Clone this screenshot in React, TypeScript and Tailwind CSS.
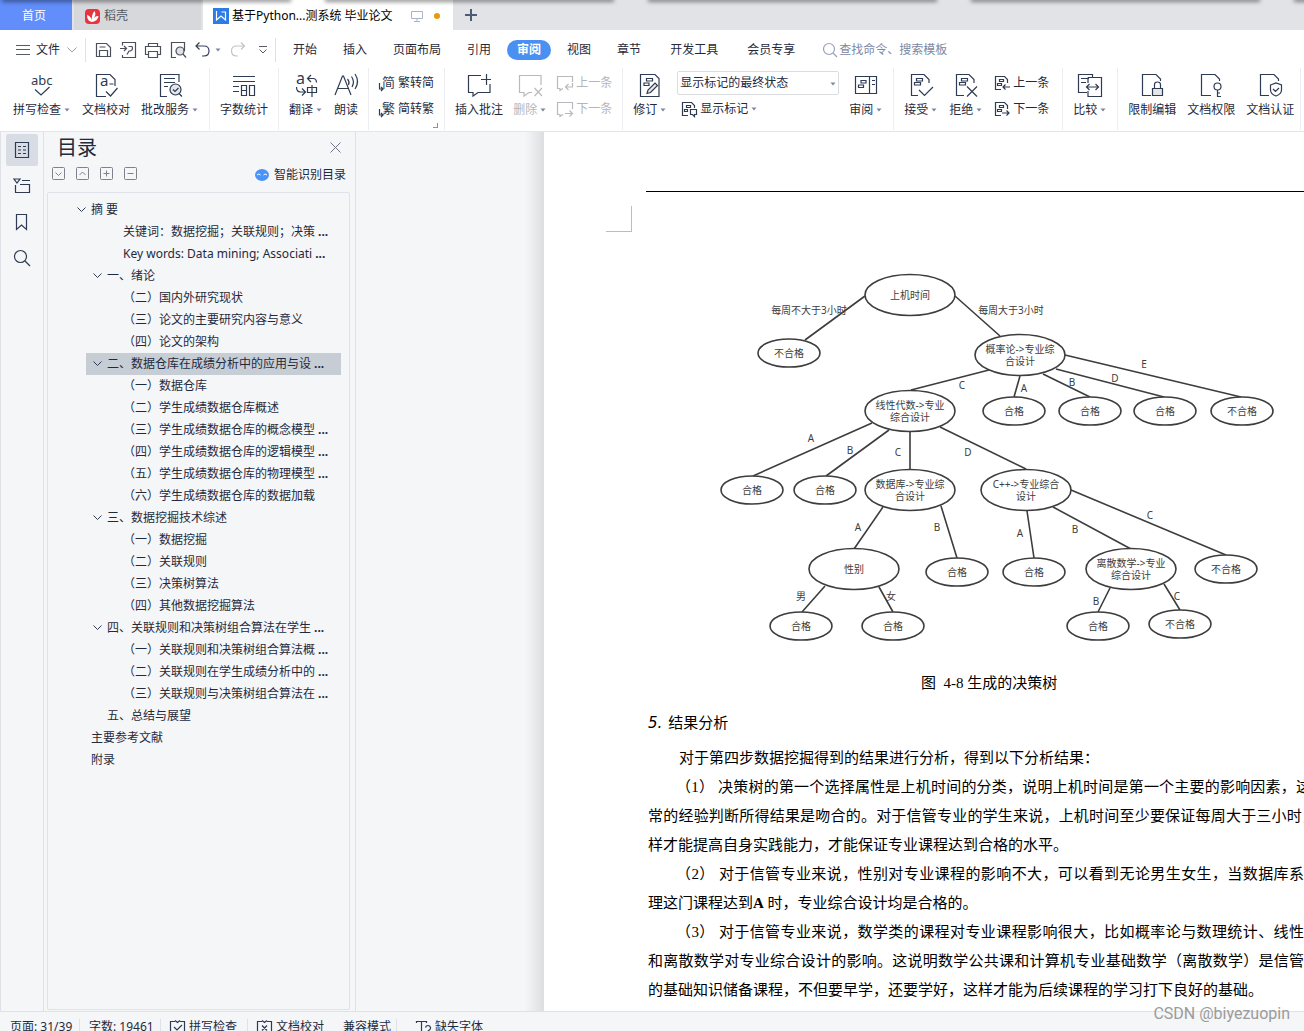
import type { ReactNode } from 'react';

const ink = '#2f3b52';

/* ---------- Icons ---------- */

function Icon({ size = 24, color = ink, children }: { size?: number; color?: string; children: ReactNode }) {
  return (
    <svg
      width={size}
      height={size}
      viewBox={`0 0 ${size} ${size}`}
      fill="none"
      stroke={color}
      strokeWidth={1.2}
      className="shrink-0 overflow-visible"
      aria-hidden="true"
    >
      {children}
    </svg>
  );
}

function Glyph({ x, y, size, children }: { x: number; y: number; size: number; children: string }) {
  return (
    <text x={x} y={y} fontSize={size} fill={ink} stroke="none">
      {children}
    </text>
  );
}

const docLines = <path d="M7.5 5.5h6V8h-6zM5.5 9.5h6V12h-6z" />;
const smallDoc = 'M7 14.5H1.5v-13h9l3 3V8M5.5 4.5h4v2h-4zM3.5 8.5h4v2h-4z';

const icons = {
  spell: (
    <Icon>
      <Glyph x={1} y={12} size={13}>abc</Glyph>
      <path d="M5 16.5l6 5.5 8.5-8" />
    </Icon>
  ),
  proof: (
    <Icon>
      <path d="M12 23.5H2.5v-22H16l5 5V13M15.5 11h4M12 18.5l4.5 4.5 7-8" />
      <Glyph x={6} y={13} size={15}>a</Glyph>
    </Icon>
  ),
  correct: (
    <Icon>
      <path d="M9 23.5H2.5v-22H21V9M6 5.5h11M6 9.5h11M6 13.5h4M21 20.5l3 3" />
      <circle cx="17.5" cy="16.5" r="5.5" fill="#e4e6ea" />
      <path d="M15 16.5l2 2 3.5-3.5" />
    </Icon>
  ),
  count: (
    <Icon>
      <path d="M1 3.5h22M1 8.5h22M1 13.5h6M1 18.5h6M9.5 12.5h5v10h-5zM9.5 17.5h5M17.5 12.5h5v10h-5z" />
    </Icon>
  ),
  translate: (
    <Icon>
      <Glyph x={2} y={11} size={16}>a</Glyph>
      <path d="M17 2l-3.5 3.5L17 9M14 5.5h5q3.5 0 3.5 4M2.5 14q0 5 4 5H11M8 15.5l3.5 3.5L8 22.5M13.5 14.5h9v5h-9zM18 12v12" />
    </Icon>
  ),
  read: (
    <Icon>
      <path d="M1 22L8.5 3h1L17 22M4 15.5h10M13.5 6q2.5 3 1 6M17.5 3.5q3.5 5 .5 10.5M21 1q5 7.5 0 15" />
    </Icon>
  ),
  toSimple: (
    <Icon size={16}>
      <Glyph x={3} y={12} size={13}>简</Glyph>
      <path d="M.5 8v6H3M2 12l2 2-2 2" />
    </Icon>
  ),
  toTraditional: (
    <Icon size={16}>
      <Glyph x={3} y={12} size={13}>繁</Glyph>
      <path d="M.5 8v6H3M2 12l2 2-2 2" />
    </Icon>
  ),
  comment: (
    <Icon>
      <path d="M14 2.5H1.5v17H6V23l5-3.5h12V11M14 6.5h10M19.5 1v11" />
    </Icon>
  ),
  removeComment: (
    <Icon color="#b9babd">
      <path d="M23 12V2.5H1.5v17H6V23l5-3.5h3M16.5 15l7.5 8M24 15l-7.5 8" />
    </Icon>
  ),
  prevComment: (
    <Icon size={16} color="#b9babd">
      <path d="M15.5 7V1.5H.5v12H3v2l3-2M15.5 8v4H9M11.5 9l-3 3 3 3" />
    </Icon>
  ),
  nextComment: (
    <Icon size={16} color="#b9babd">
      <path d="M15.5 8V1.5H.5v12H3v2l3-2M8 12.5h7.5M12.5 9.5l3 3-3 3" />
    </Icon>
  ),
  revise: (
    <Icon>
      <path d="M2.5 1.5H17l4 4v18H2.5zM8.5 5.5h6V8h-6zM6 10h5v2.5H6z" />
      <path d="M9 20.5l1-3.5 7-7 2.5 2.5-7 7z" fill="#e4e6ea" />
    </Icon>
  ),
  showMarks: (
    <Icon size={16}>
      <path d="M7 14.5H1.5v-13h9l3 3V7M5.5 4.5h4v2h-4zM3.5 8.5h3v2h-3zM9.5 8.5h6v5h-2v2l-2-2h-2z" />
    </Icon>
  ),
  review: (
    <Icon>
      <path d="M1.5 3.5h21v17h-21zM15.5 3.5v17M7 7.5h5V10H7zM4.5 12h5v2.5h-5zM18 7.5h3M18 11.5h3" />
    </Icon>
  ),
  accept: (
    <Icon>
      <path d="M9 22.5H2.5v-21H15l5 5V10M10 17l5.5 5.5L24 14" />
      {docLines}
    </Icon>
  ),
  reject: (
    <Icon>
      <path d="M10 22.5H2.5v-21H15l5 5V10M13 13.5l10 10M23 13.5l-10 10" />
      {docLines}
    </Icon>
  ),
  prev: (
    <Icon size={16}>
      <path d={smallDoc} />
      <path d="M16 12H9M11.5 9.5L9 12l2.5 2.5" />
    </Icon>
  ),
  next: (
    <Icon size={16}>
      <path d={smallDoc} />
      <path d="M8 12h7M12.5 9.5L15 12l-2.5 2.5" />
    </Icon>
  ),
  compare: (
    <Icon>
      <path d="M9 19.5H.5v-18h14v3M10 4.5h13.5v19H10V18M10 4.5V10M3 5.5h8M3 9.5h5M8.5 14h12M11.5 11l-3 3 3 3M17.5 11l3 3-3 3" />
    </Icon>
  ),
  lock: (
    <Icon>
      <path d="M11 22.5H2.5v-21H16l4.5 4.5V8M14.5 15v-3.5q0-2.5 3-2.5t3 2.5V15" />
      <path d="M12.5 15.5h10v7h-10z" fill="#e4e6ea" />
    </Icon>
  ),
  key: (
    <Icon>
      <path d="M12 22.5H2.5v-21H16l4.5 4.5V8M18.5 17v6.5H22M18.5 20H21" />
      <circle cx="18.5" cy="13.5" r="3.5" />
    </Icon>
  ),
  certify: (
    <Icon>
      <path d="M11 22.5H2.5v-21H16l4.5 4.5V8M12.5 12l5.5-2 5.5 2v5q0 4-5.5 6-5.5-2-5.5-6zM15 16l2.5 2.5L21 15" />
    </Icon>
  ),
};

const Caret = () => (
  <svg width="6" height="4" viewBox="0 0 6 4" className="shrink-0" aria-hidden="true">
    <path d="M.5.5h5L3 3.5z" fill="#7b879f" />
  </svg>
);

/* ---------- Title tabs ---------- */

function TitleTabs() {
  return (
    <div className="relative flex h-[30px] shrink-0 overflow-hidden bg-[#e2e3e7]">
      <button className="w-[72px] bg-[#618efb] pr-1 pt-px text-white">首页</button>
      <button className="ml-[2px] flex w-[127px] items-center gap-1 bg-[#d7d8dc] pl-[11px] pt-[2px] text-[#55585f]">
        <svg width="15" height="15" viewBox="0 0 15 15" aria-hidden="true">
          <path d="M4 0h7q4 0 4 4v7q0 4-4 4H4q-4 0-4-4V4q0-4 4-4z" fill="#e83440" />
          <path d="M7 13Q2 12 2 6q4 1 5 5.5Q6 6 9.5 2q2 3-.5 7 2-2.5 4.5-2Q13 12 7 13z" fill="#fff" />
        </svg>
        稻壳
      </button>
      <div className="ml-[2px] flex w-[250px] items-center bg-white pl-[10px] pt-[2px] text-black">
        <svg width="16" height="16" viewBox="0 0 16 16" aria-hidden="true">
          <path d="M0 0h16v16H0z" fill="#2d7be5" />
          <path d="M3.5 3v9L8 8l4.5 4V4h-4" fill="none" stroke="#fff" strokeWidth="1.2" />
        </svg>
        <span className="ml-[3px] w-[164px] whitespace-nowrap">基于Python...测系统 毕业论文</span>
        <svg width="12" height="12" viewBox="0 0 12 12" className="ml-[15px]" fill="none" stroke="#a9b4c8" aria-hidden="true">
          <path d="M.5 1.5h11v7H.5zM6 8.5v3M3 11.5h6" />
        </svg>
        <span className="ml-[11px] size-[6px] rounded-full bg-[#e69a0b]" />
      </div>
      <button aria-label="新建" className="ml-3">
        <svg width="12" height="12" viewBox="0 0 12 12" stroke="#4d5b76" strokeWidth="2" aria-hidden="true">
          <path d="M6 0v12M0 6h12" />
        </svg>
      </button>
      {/* shadow of the windows behind */}
      <div className="absolute left-1 right-0 -top-px flex gap-[38px]">
        {[0, 1, 2, 3, 4].map((i) => (
          <span key={i} className="h-px w-[285px] shrink-0 shadow-[0_0_4px_2px_#0000006b]" />
        ))}
      </div>
    </div>
  );
}

/* ---------- Menu ---------- */

const menuTabs = ['开始', '插入', '页面布局', '引用', '审阅', '视图', '章节'];

function MenuBar() {
  return (
    <div className="flex h-[37px] shrink-0 items-center bg-white pl-4 pt-[2px]">
      <button className="flex items-center">
        <svg width="14" height="12" viewBox="0 0 14 12" stroke="#565b66" aria-hidden="true">
          <path d="M0 1.5h14M0 5.5h14M0 10.5h14" />
        </svg>
        <span className="ml-[6px]">文件</span>
        <svg width="10" height="6" viewBox="0 0 10 6" className="ml-[7px]" fill="none" stroke="#9a9ea8" aria-hidden="true">
          <path d="M.5.5L5 5 9.5.5" />
        </svg>
      </button>
      <div className="ml-2 flex h-6 items-center gap-[9px] border-x border-[#e0e1e5] pl-[9px] pr-2">
        <button aria-label="保存">
          <Icon size={16} color="#4a4f5a">
            <path d="M1.5 1.5h10l4 4v9h-14zM4.5 14.5v-6h8v6M4.5 5h6" />
          </Icon>
        </button>
        <button aria-label="输出为PDF">
          <Icon size={16} color="#4a4f5a">
            <path d="M2.5 3.5v-3h13v15h-13V13M0 6.5h6M4 4l2.5 2.5L4 9M8.5 4.5H12q1.5 3-1.5 4.5H9l-2 3.5" />
          </Icon>
        </button>
        <button aria-label="打印">
          <Icon size={16} color="#4a4f5a">
            <path d="M3.5 4.5v-3h9v3M3.5 12.5h-3v-8h15v8h-3M3.5 9.5h9v6h-9z" />
          </Icon>
        </button>
        <button aria-label="打印预览">
          <Icon size={16} color="#4a4f5a">
            <path d="M6 15.5H1.5V.5h13V9M13 12l3 3.5" />
            <circle cx="10" cy="9" r="4" fill="#dfe1e5" />
          </Icon>
        </button>
        <button aria-label="撤销" className="flex items-center gap-1">
          <Icon size={16} color="#34405c">
            <path d="M4.5.5L1 4l3.5 3.5M1 4h8q5 0 5 5t-5 5H7" />
          </Icon>
          <Caret />
        </button>
        <button aria-label="恢复">
          <Icon size={16} color="#c1c3c8">
            <path d="M11 .5L14.5 4 11 7.5M14.5 4h-8q-5 0-5 5t5 5H8" />
          </Icon>
        </button>
        <button aria-label="自定义快速访问" className="ml-1">
          <svg width="8" height="8" viewBox="0 0 8 8" fill="none" stroke="#565b66" aria-hidden="true">
            <path d="M0 .5h8M.5 3.5L4 7l3.5-3.5" />
          </svg>
        </button>
      </div>
      <nav className="ml-[17px] flex shrink-0 gap-[26px]">
        {menuTabs.map((tab) =>
          tab === '审阅' ? (
            <button key={tab} className="-mx-[10px] h-5 rounded-full bg-[#4a90f2] px-[10px] font-bold text-white">
              {tab}
            </button>
          ) : (
            <button key={tab}>{tab}</button>
          )
        )}
      </nav>
      <nav className="ml-[29px] flex shrink-0 gap-[29px]">
        <button>开发工具</button>
        <button>会员专享</button>
      </nav>
      <label className="ml-7 flex items-center gap-[2px]">
        <Icon size={14} color="#98a2b8">
          <circle cx="6" cy="6" r="5.5" />
          <path d="M10 10l4 4" />
        </Icon>
        <input
          aria-label="查找命令、搜索模板"
          placeholder="查找命令、搜索模板"
          className="w-40 bg-transparent outline-none placeholder:text-[#7c88a1]"
        />
      </label>
    </div>
  );
}

/* ---------- Ribbon ---------- */

type ToolProps = { icon: ReactNode; label: string; caret?: boolean; disabled?: boolean };

function Tool({ icon, label, caret, disabled }: ToolProps) {
  return (
    <button disabled={disabled} className="flex shrink-0 flex-col items-center gap-1 disabled:text-[#b4b5b9]">
      {icon}
      <span className="flex h-[18px] items-center">
        {label}
        {caret && <span className="w-[10px] pl-[3px]"><Caret /></span>}
      </span>
    </button>
  );
}

function RowTool({ icon, label, caret, disabled }: ToolProps) {
  return (
    <button disabled={disabled} className="flex h-[18px] items-center gap-[3px] disabled:text-[#b4b5b9]">
      {icon}
      {label}
      {caret && <Caret />}
    </button>
  );
}

function Ribbon() {
  const group = 'flex shrink-0 border-r border-[#ecedf0] h-[62px] pt-[5px] px-[10px]';
  const stack = 'flex flex-col gap-2 pt-px';
  return (
    <div className="z-10 flex h-[65px] shrink-0 overflow-hidden border-b border-[#e4e5e9] bg-white pl-[3px] pt-px">
      <div className={`${group} gap-[11px]`}>
        <Tool icon={icons.spell} label="拼写检查" caret />
        <Tool icon={icons.proof} label="文档校对" />
        <Tool icon={icons.correct} label="批改服务" caret />
      </div>
      <div className={group}>
        <Tool icon={icons.count} label="字数统计" />
      </div>
      <div className={`${group} gap-[11px]`}>
        <Tool icon={icons.translate} label="翻译" caret />
        <Tool icon={icons.read} label="朗读" />
      </div>
      <div className={`${group} relative`}>
        <div className={stack}>
          <RowTool icon={icons.toSimple} label="繁转简" />
          <RowTool icon={icons.toTraditional} label="简转繁" />
        </div>
        <span className="absolute bottom-[2px] right-[6px] size-[5px] border-b border-r border-[#8a92a3]" />
      </div>
      <div className={`${group} gap-[10px]`}>
        <Tool icon={icons.comment} label="插入批注" />
        <Tool icon={icons.removeComment} label="删除" caret disabled />
        <div className={stack}>
          <RowTool icon={icons.prevComment} label="上一条" disabled />
          <RowTool icon={icons.nextComment} label="下一条" disabled />
        </div>
      </div>
      <div className={`${group} gap-[10px]`}>
        <Tool icon={icons.revise} label="修订" caret />
        <div className="flex w-[162px] flex-col gap-[5px]">
          <div className="relative -mt-[2px]">
            <select aria-label="显示状态" className="h-6 w-full appearance-none rounded-[2px] border border-[#dcdde1] pl-[2px]">
              <option>显示标记的最终状态</option>
            </select>
            <span className="pointer-events-none absolute right-[3px] top-[11px]"><Caret /></span>
          </div>
          <div className="pl-1">
            <RowTool icon={icons.showMarks} label="显示标记" caret />
          </div>
        </div>
        <Tool icon={icons.review} label="审阅" caret />
      </div>
      <div className={`${group} gap-[11px] pr-[13px]`}>
        <Tool icon={icons.accept} label="接受" caret />
        <Tool icon={icons.reject} label="拒绝" caret />
        <div className={stack}>
          <RowTool icon={icons.prev} label="上一条" />
          <RowTool icon={icons.next} label="下一条" />
        </div>
      </div>
      <div className={group}>
        <Tool icon={icons.compare} label="比较" caret />
      </div>
      <div className={`${group} gap-[11px] pr-[6px]`}>
        <Tool icon={icons.lock} label="限制编辑" />
        <Tool icon={icons.key} label="文档权限" />
        <Tool icon={icons.certify} label="文档认证" />
      </div>
    </div>
  );
}

/* ---------- Side bar and contents ---------- */

function SideBar() {
  const button = 'flex h-8 w-8 items-center justify-center rounded-[2px]';
  return (
    <div className="flex w-11 shrink-0 flex-col items-center gap-1 border-x border-[#dfe1e6] pt-[2px]">
      <button aria-label="目录" className={`${button} bg-[#d8dce4]`}>
        <Icon size={16}>
          <path d="M1.5.5h13v15h-13zM4 4.5h3M9 4.5h3M4 8h3M9 8h3M4 11.5h3M9 11.5h3" />
        </Icon>
      </button>
      <button aria-label="章节" className={button}>
        <Icon size={16}>
          <path d="M0 1h6L3 5zM8 2.5h8M1.5 7v7.5h14v-8H6" />
        </Icon>
      </button>
      <button aria-label="书签" className={button}>
        <Icon size={16}>
          <path d="M2.5.5h10v15l-5-4.5-5 4.5z" />
        </Icon>
      </button>
      <button aria-label="查找" className={button}>
        <Icon size={16}>
          <circle cx="6.5" cy="6.5" r="6" />
          <path d="M11 11l5 5" />
        </Icon>
      </button>
    </div>
  );
}

type Entry = { text: string; level: 0 | 1 | 2; open?: boolean; cut?: boolean; active?: boolean };

const entries: Entry[] = [
  { text: '摘 要', level: 0, open: true },
  { text: '关键词：数据挖掘；关联规则；决策', level: 2, cut: true },
  { text: 'Key words: Data mining; Associati', level: 2, cut: true },
  { text: '一、绪论', level: 1, open: true },
  { text: '（二）国内外研究现状', level: 2 },
  { text: '（三）论文的主要研究内容与意义', level: 2 },
  { text: '（四）论文的架构', level: 2 },
  { text: '二、数据仓库在成绩分析中的应用与设', level: 1, open: true, cut: true, active: true },
  { text: '（一）数据仓库', level: 2 },
  { text: '（二）学生成绩数据仓库概述', level: 2 },
  { text: '（三）学生成绩数据仓库的概念模型', level: 2, cut: true },
  { text: '（四）学生成绩数据仓库的逻辑模型', level: 2, cut: true },
  { text: '（五）学生成绩数据仓库的物理模型', level: 2, cut: true },
  { text: '（六）学生成绩数据仓库的数据加载', level: 2 },
  { text: '三、数据挖掘技术综述', level: 1, open: true },
  { text: '（一）数据挖掘', level: 2 },
  { text: '（二）关联规则', level: 2 },
  { text: '（三）决策树算法', level: 2 },
  { text: '（四）其他数据挖掘算法', level: 2 },
  { text: '四、关联规则和决策树组合算法在学生', level: 1, open: true, cut: true },
  { text: '（一）关联规则和决策树组合算法概', level: 2, cut: true },
  { text: '（二）关联规则在学生成绩分析中的', level: 2, cut: true },
  { text: '（三）关联规则与决策树组合算法在', level: 2, cut: true },
  { text: '五、总结与展望', level: 1 },
  { text: '主要参考文献', level: 0 },
  { text: '附录', level: 0 },
];

const indents = ['pl-[29px]', 'pl-[7px]', 'pl-[37px]'];

const treeTools = [
  { label: '展开', d: 'M3.5 5.5l3 3 3-3' },
  { label: '收起', d: 'M3.5 8l3-3 3 3' },
  { label: '增加', d: 'M6.5 3.5v6M3.5 6.5h6' },
  { label: '减少', d: 'M3.5 6.5h6' },
];

function Contents() {
  return (
    <aside className="flex w-[312px] shrink-0 flex-col border-r border-[#dfe1e6] pb-px pl-[3px] pr-[5px]">
      <div className="flex h-[30px] items-center justify-between pl-[10px] pr-[9px]">
        <h2 className="pt-px text-xl">目录</h2>
        <button aria-label="关闭">
          <svg width="11" height="11" viewBox="0 0 11 11" stroke="#6c7382" aria-hidden="true">
            <path d="M.5.5l10 10M10.5.5l-10 10" />
          </svg>
        </button>
      </div>
      <div className="flex h-[23px] items-center gap-[11px] pl-[5px] pr-1">
        {treeTools.map((tool) => (
          <button key={tool.label} aria-label={tool.label}>
            <svg width="13" height="13" viewBox="0 0 13 13" fill="none" stroke="#7d828c" aria-hidden="true">
              <rect x=".5" y=".5" width="12" height="12" rx="1" />
              <path d={tool.d} />
            </svg>
          </button>
        ))}
        <button className="ml-auto flex items-center gap-[5px] pt-[2px]">
          <svg width="14" height="12" viewBox="0 0 14 12" aria-hidden="true">
            <ellipse cx="7" cy="6" rx="7" ry="6" fill="#4a94f7" />
            <path d="M2 6q2-2 3.5 0M8.5 6Q10 4 12 6" fill="none" stroke="#fff" />
          </svg>
          智能识别目录
        </button>
      </div>
      <ul className="mt-[7px] flex-1 rounded-[2px] border border-[#e0e2e9] pt-[6px]">
        {entries.map((entry) => (
          <li key={entry.text} className={entry.level === 0 ? 'flex h-[22px]' : 'ml-[38px] mr-2 flex h-[22px]'}>
            <button
              className={`flex h-full w-full items-center whitespace-nowrap ${indents[entry.level]} ${
                entry.active ? 'bg-[#c6cdd5]' : ''
              }`}
            >
              {entry.level < 2 && (
                <span className="w-[14px]">
                  {entry.open && (
                    <svg width="9" height="6" viewBox="0 0 9 6" fill="none" stroke={ink} aria-hidden="true">
                      <path d="M.5.5l4 4 4-4" />
                    </svg>
                  )}
                </span>
              )}
              {entry.text}
              {entry.cut && <span className="ml-[3px] font-bold">...</span>}
            </button>
          </li>
        ))}
      </ul>
    </aside>
  );
}

/* ---------- Decision tree figure ---------- */

type TreeNode = { x: number; y: number; lines: string[]; big?: boolean };

const nodes: TreeNode[] = [
  { x: 910, y: 295, lines: ['上机时间'], big: true },
  { x: 789, y: 353, lines: ['不合格'] },
  { x: 1020, y: 355, lines: ['概率论->专业综', '合设计'], big: true },
  { x: 910, y: 411, lines: ['线性代数->专业', '综合设计'], big: true },
  { x: 1014, y: 411, lines: ['合格'] },
  { x: 1090, y: 411, lines: ['合格'] },
  { x: 1165, y: 411, lines: ['合格'] },
  { x: 1242, y: 411, lines: ['不合格'] },
  { x: 752, y: 490, lines: ['合格'] },
  { x: 825, y: 490, lines: ['合格'] },
  { x: 910, y: 490, lines: ['数据库->专业综', '合设计'], big: true },
  { x: 1026, y: 490, lines: ['C++->专业综合', '设计'], big: true },
  { x: 854, y: 569, lines: ['性别'], big: true },
  { x: 957, y: 572, lines: ['合格'] },
  { x: 1034, y: 572, lines: ['合格'] },
  { x: 1131, y: 569, lines: ['离散数学->专业', '综合设计'], big: true },
  { x: 1226, y: 569, lines: ['不合格'] },
  { x: 801, y: 626, lines: ['合格'] },
  { x: 893, y: 626, lines: ['合格'] },
  { x: 1098, y: 626, lines: ['合格'] },
  { x: 1180, y: 624, lines: ['不合格'] },
];

const edges =
  'M865 296L805 340M955 296L1000 336M989 370L911 390M1020 376L1014 397M1043 374L1090 397M1056 369L1164 397M1065 355L1241 397' +
  'M872 423L753 476M889 430L826 476M910 432V470M940 427L1026 469M883 507L854 549M941 506L957 558M1027 511L1034 558' +
  'M1053 507L1131 549M1071 490L1226 555M825 586L802 612M879 587L893 612M1110 588L1098 612M1164 584L1180 610';

const edgeLabels: [string, number, number][] = [
  ['每周不大于3小时', 809, 310],
  ['每周大于3小时', 1011, 310],
  ['E', 1144, 364],
  ['D', 1115, 378],
  ['B', 1072, 382],
  ['A', 1024, 388],
  ['C', 962, 385],
  ['A', 811, 438],
  ['B', 850, 450],
  ['C', 898, 452],
  ['D', 968, 452],
  ['A', 858, 527],
  ['B', 937, 527],
  ['A', 1020, 533],
  ['B', 1075, 529],
  ['C', 1150, 515],
  ['男', 801, 596],
  ['女', 891, 596],
  ['B', 1096, 601],
  ['C', 1177, 596],
];

function DecisionTree() {
  return (
    <svg
      width="560"
      height="376"
      viewBox="718 270 560 376"
      className="ml-[72px] mt-[38px] shrink-0"
      fill="#3d3d3d"
      fontSize="10"
      textAnchor="middle"
    >
      <path d={edges} stroke="#3d3d3d" strokeWidth="1.6" />
      {nodes.map((n) => (
        <g key={`${n.x}-${n.y}`}>
          <ellipse cx={n.x} cy={n.y} rx={n.big ? 45 : 31} ry={n.big ? 20.5 : 14} fill="#fff" stroke="#3d3d3d" strokeWidth="1.6" />
          {n.lines.map((line, i) => (
            <text key={line} x={n.x} y={n.y + 4 + (n.lines.length > 1 ? i * 12 - 6 : 0)}>
              {line}
            </text>
          ))}
        </g>
      ))}
      {edgeLabels.map(([label, x, y]) => (
        <text key={`${x}-${y}`} x={x} y={y + 4}>
          {label}
        </text>
      ))}
    </svg>
  );
}

/* ---------- Document page ---------- */

function Page() {
  // full lines are justified up to the edge of the column
  const full = 'block whitespace-nowrap [text-align-last:justify]';
  const first = `${full} pl-7`;
  return (
    <main className="flex min-w-0 flex-1 overflow-hidden bg-[#f5f6f8]">
      <div className="w-[169px] shrink-0" />
      <div className="w-[19px] shrink-0 bg-linear-to-r from-[#f5f6f8] to-[#dcdee1]" />
      <article className="flex min-w-0 flex-1 flex-col bg-white pl-[102px] font-['Liberation_Serif','Noto_Sans_CJK_SC',serif] text-[15px] leading-[29px] text-black">
        <div className="h-[60px] shrink-0 border-b border-black" />
        <div className="-ml-10 mt-[14px] size-[26px] shrink-0 border-b border-r border-[#bdbdbd]" />
        <div className="font-['Noto_Sans','Noto_Sans_CJK_SC',sans-serif]">
          <DecisionTree />
        </div>
        <p className="mt-[23px] whitespace-pre pl-[275px]">图  4-8 生成的决策树</p>
        <h3 className="mt-[11px] pl-[2px]">
          <i className="mr-[6px] font-['DejaVu_Sans']">5.</i>结果分析
        </h3>
        <div className="mt-[6px] pl-[2px]">
          <p className="pl-[31px]">对于第四步数据挖掘得到的结果进行分析，得到以下分析结果：</p>
          <p>
            <span className={`${first} -mr-[7px]`}>（1） 决策树的第一个选择属性是上机时间的分类，说明上机时间是第一个主要的影响因素，这</span>
            <span className={`${full} -mr-[13px]`}>常的经验判断所得结果是吻合的。对于信管专业的学生来说，上机时间至少要保证每周大于三小时，</span>
            <span className="block">样才能提高自身实践能力，才能保证专业课程达到合格的水平。</span>
          </p>
          <p>
            <span className={first}>（2） 对于信管专业来说，性别对专业课程的影响不大，可以看到无论男生女生，当数据库系</span>
            <span className="block">理这门课程达到<b>A</b> 时，专业综合设计均是合格的。</span>
          </p>
          <p>
            <span className={first}>（3） 对于信管专业来说，数学类的课程对专业课程影响很大，比如概率论与数理统计、线性</span>
            <span className={full}>和离散数学对专业综合设计的影响。这说明数学公共课和计算机专业基础数学（离散数学）是信管</span>
            <span className="block">的基础知识储备课程，不但要早学，还要学好，这样才能为后续课程的学习打下良好的基础。</span>
          </p>
        </div>
      </article>
    </main>
  );
}

/* ---------- Status bar ---------- */

function StatusBar() {
  return (
    <footer className="relative h-5 shrink-0">
      <div className="flex h-5 items-start overflow-hidden border-t border-[#dfe1e6] bg-[#f5f6f8]">
        <div className="mt-[5px] flex h-5 shrink-0 items-center whitespace-nowrap">
          <span className="w-20 border-r border-[#dfe1e6] pl-[10px]">页面: 31/39</span>
          <span className="w-[81px] border-r border-[#dfe1e6] pl-[9px]">字数: 19461</span>
          <button className="flex w-[87px] items-center gap-1 border-r border-[#dfe1e6] pl-[9px]">
            <Icon size={15}>
              <path d="M5 1.5H.5v13h14v-13H10M4 7l3 3 5-5M5 .5l2.5 2L10 .5" />
            </Icon>
            拼写检查
          </button>
          <button className="flex w-[86px] items-center gap-1 pl-[9px]">
            <Icon size={15}>
              <path d="M5 1.5H.5v13h14v-13H10M5 5.5l5 5M10 5.5l-5 5M5 .5l2.5 2L10 .5" />
            </Icon>
            文档校对
          </button>
          <span className="w-[63px] border-r border-[#dfe1e6] pl-[9px]">兼容模式</span>
          <button className="flex items-center gap-1 pl-[19px]">
            <Icon size={15}>
              <path d="M.5 3V1.5h10V3M5.5 1.5v13M9.5 7.5q.5-2 2.5-2t2.5 2-2.5 3.5v1M12 13v1.5" />
            </Icon>
            缺失字体
          </button>
        </div>
      </div>
      <span className="absolute -top-[9px] right-[14px] font-['Roboto'] text-base text-[#9b9b9b]">CSDN @biyezuopin</span>
    </footer>
  );
}

export default function App() {
  return (
    <div className="flex h-screen flex-col overflow-hidden bg-[#f5f6f8] font-['Noto_Sans','Noto_Sans_CJK_SC',sans-serif] text-xs text-[#1f2a3d]">
      <TitleTabs />
      <MenuBar />
      <Ribbon />
      <div className="flex min-h-0 flex-1">
        <SideBar />
        <Contents />
        <Page />
      </div>
      <StatusBar />
    </div>
  );
}
